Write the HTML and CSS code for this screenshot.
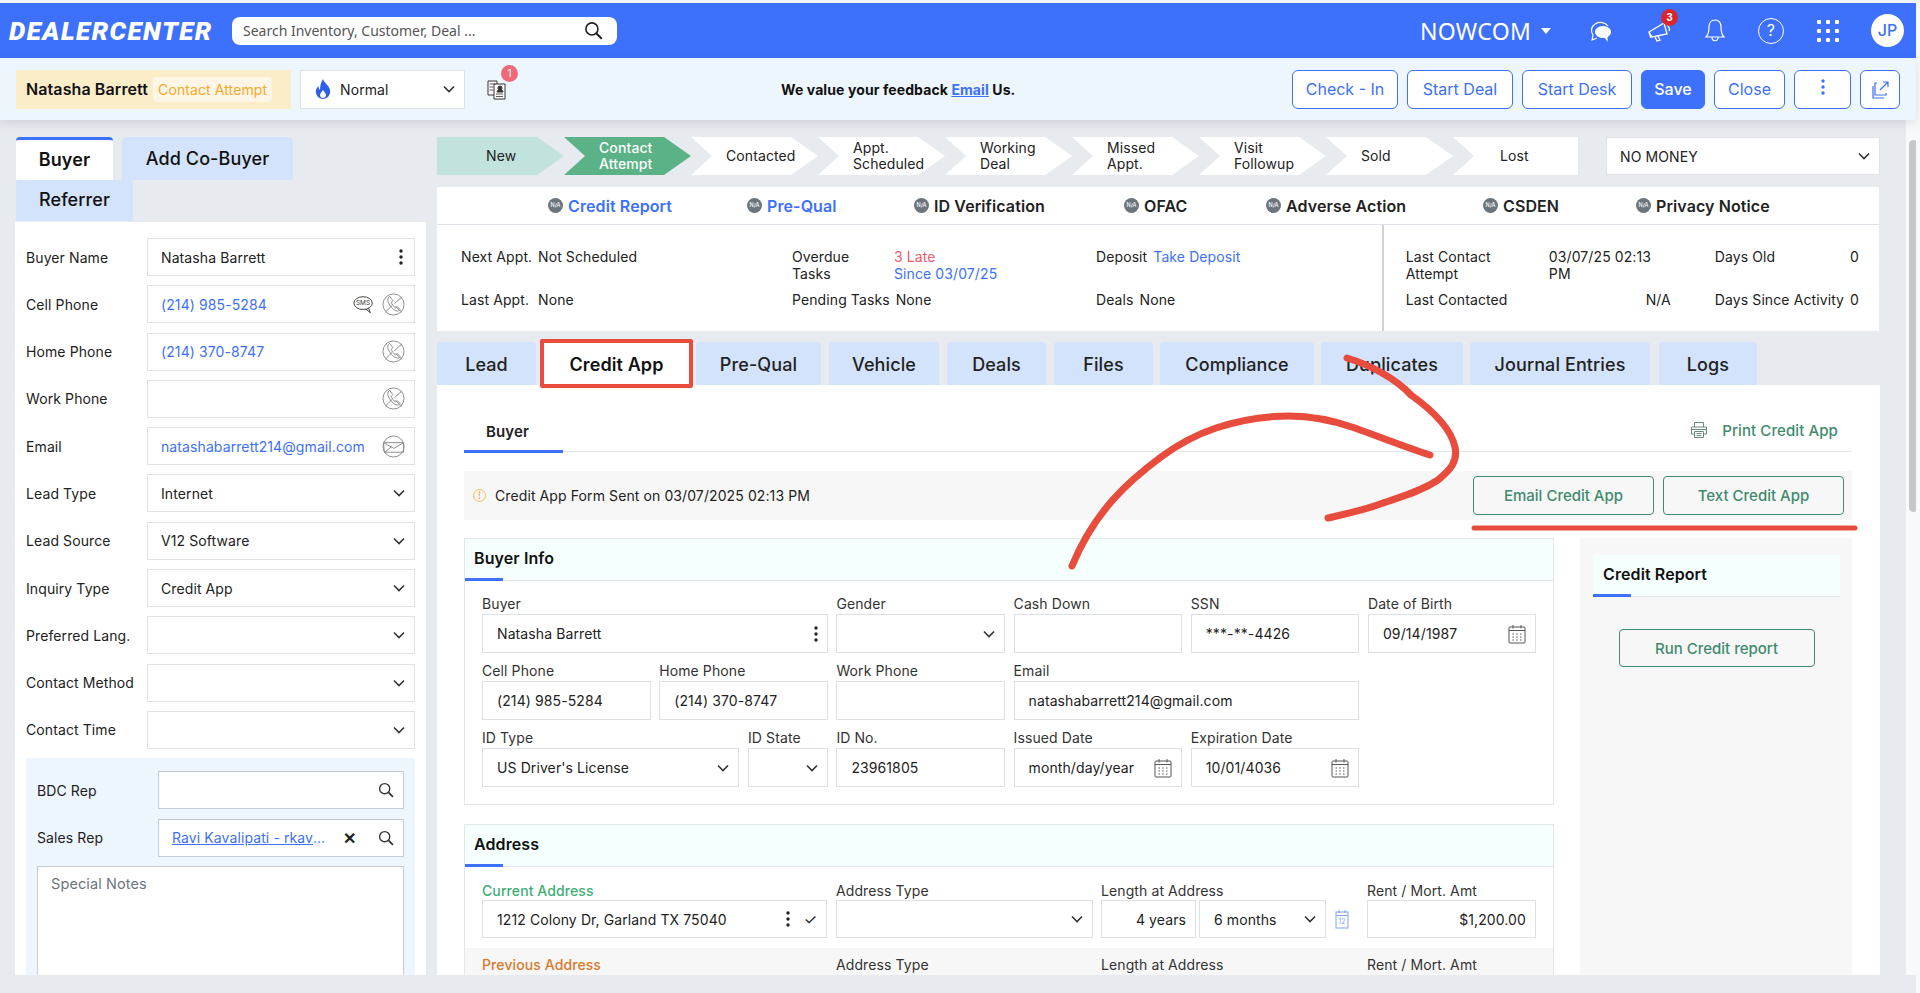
FILE: index.html
```html
<!DOCTYPE html>
<html lang="en">
<head>
    <meta charset="UTF-8">
    <title>DealerCenter - Natasha Barrett</title>
    <link rel="stylesheet" href="styles.css">
</head>
<body>

<svg class="defs" xmlns="http://www.w3.org/2000/svg">
    <symbol id="i-chev" viewBox="0 0 12 8"><path d="M1 1.500l5 5 5-5" fill="none" stroke="currentColor" stroke-width="1.600"/></symbol>
    <symbol id="i-search" viewBox="0 0 18 18"><circle cx="7.500" cy="7.500" r="5.700" fill="none" stroke="currentColor" stroke-width="1.500"/><path d="M11.800 11.800l5 5" stroke="currentColor" stroke-width="2"/></symbol>
    <symbol id="i-phone" viewBox="0 0 24 24"><g fill="none" stroke="#8a8a8a" stroke-width="1"><circle cx="12" cy="12" r="11"/><path d="M8 3.500c-2 1.500-2.500 3.500-1.500 6 1.500 4 4.500 7.500 8 9 2 .8 3.500.3 4.500-1.200l-3-3-2 1.200c-2-1.200-3.500-3.500-4.300-5.800l1.600-1.800z"/><path d="M3.500 20l7-7M13 11l8-7M14 14l6.500 6"/></g></symbol>
    <symbol id="i-mail" viewBox="0 0 24 24"><g fill="none" stroke="#8a8a8a" stroke-width="1"><circle cx="12" cy="12" r="11"/><path d="M1.500 8h21v10h-20zM1.500 8l11 6 10-6M3 18l7-6"/></g></symbol>
    <symbol id="i-cal" viewBox="0 0 18 20"><g fill="none" stroke="#555" stroke-width="1"><rect x="1" y="3" width="16" height="16" rx="1"/><path d="M1 6.500h16M5 1v3.500M13 1v3.500"/><path d="M4.500 10h1.500M8.200 10h1.500M12 10h1.500M4.500 13h1.500M8.200 13h1.500M12 13h1.500M4.500 16h1.500M8.200 16h1.500M12 16h1.500"/></g></symbol>
    <symbol id="i-dots" viewBox="0 0 4 16"><circle cx="2" cy="2" r="1.700"/><circle cx="2" cy="8" r="1.700"/><circle cx="2" cy="14" r="1.700"/></symbol>
</svg>

<div class="app">
    <header class="topbar">
        <div class="logo">DEALERCENTER</div>
        <div class="search">
            <span>Search Inventory, Customer, Deal ...</span>
            <svg class="search-icon"><use href="#i-search"/></svg>
        </div>
        <div class="company">NOWCOM <span class="caret"></span></div>
        <svg class="top-icon chat" viewBox="0 0 26 26" fill="none" stroke="#fff" stroke-width="1.200">
            <path d="M21 8a9 8 0 1 0-15 9l-1 5 5-2"/>
            <ellipse cx="16" cy="14" rx="7.500" ry="5.500" fill="#fff"/>
            <path d="M18 19l2 3v-4" fill="#fff"/>
        </svg>
        <div class="top-icon megaphone">
            <svg viewBox="0 0 26 26" fill="none" stroke="#fff" stroke-width="1.300">
                <path d="M3 14l15-9 3 11-15 3zM3 14l1.500 5 1.500 0M9 19l2 4 3-1-2-4M21 7c2 1 3 4 2 6"/>
            </svg>
            <span class="badge-red">3</span>
        </div>
        <svg class="top-icon bell" viewBox="0 0 26 26" fill="none" stroke="#fff" stroke-width="1.200">
            <path d="M13 2c-4 0-6 3-6 7 0 5-1 8-3 10h18c-2-2-3-5-3-10 0-4-2-7-6-7zM10 19c0 5 6 5 6 0"/>
        </svg>
        <div class="top-icon help">?</div>
        <div class="top-icon apps">
            <i></i><i></i><i></i><i></i><i></i><i></i><i></i><i></i><i></i>
        </div>
        <div class="avatar">JP</div>
    </header>

    <div class="toolbar">
        <div class="name-box">
            <span class="name">Natasha Barrett</span>
            <span class="status">Contact Attempt</span>
        </div>
        <div class="temp-select">
            <svg class="flame" viewBox="0 0 16 20"><path d="M8 0c1 4 6 6 7 11 1 5-3 9-7 9s-8-4-7-9c.5-2 1.500-3 2.500-4 0 2 .5 3 1.500 4C5 7 6 3 8 0zM8 11c-1 2-3 3-3 5s1.500 3 3 3 3-1 3-3-2-3-3-5z" fill="#2f5fe8"/></svg>
            <span>Normal</span>
            <svg class="chev"><use href="#i-chev"/></svg>
        </div>
        <div class="doc-icon">
            <svg viewBox="0 0 20 22" fill="#fff" stroke="#333" stroke-width="1">
                <path d="M1 3h9v14H1z"/><path d="M7 6h11v15H7z"/>
                <path d="M2.500 6h6M2.500 9h4M2.500 12h4M9 16h7M9 18.500h7" stroke-width=".8"/>
                <circle cx="13" cy="10" r="2" fill="#333"/><path d="M10 14c0-3 6-3 6 0z" fill="#333"/>
            </svg>
            <span class="doc-badge">1</span>
        </div>
        <div class="feedback">We value your feedback <a href="#">Email</a> Us.</div>
        <div class="actions">
            <button class="btn b-check">Check - In</button>
            <button class="btn b-deal">Start Deal</button>
            <button class="btn b-desk">Start Desk</button>
            <button class="btn b-save">Save</button>
            <button class="btn b-close">Close</button>
            <button class="btn b-more"><svg class="dots"><use href="#i-dots"/></svg></button>
            <button class="btn b-pop">
                <svg class="pop" viewBox="0 0 20 20" fill="none" stroke="#3d70fb" stroke-width="1.200">
                    <path d="M7 3H5v12h11v-2M3 6v12h11M10 10l8-8M13 2h5v5"/>
                </svg>
            </button>
        </div>
    </div>

    <div class="workspace">
        <aside class="left-col">
            <div class="left-tabs">
                <div class="ltab ltab-on">Buyer</div>
                <div class="ltab ltab-co">Add Co-Buyer</div>
                <div class="ltab ltab-ref">Referrer</div>
            </div>
            <div class="left-panel">
                <div class="lrow"><label>Buyer Name</label><div class="linput">Natasha Barrett<svg class="dots end"><use href="#i-dots"/></svg></div></div>
                <div class="lrow"><label>Cell Phone</label><div class="linput link">(214) 985-5284
                    <svg class="sms end" viewBox="0 0 24 20" fill="none" stroke="#333"><ellipse cx="11" cy="8.500" rx="10" ry="7"/><path d="M14 15l5 4-2-5"/><text x="11" y="11" font-size="7" text-anchor="middle" fill="#333" stroke="none">SMS</text></svg>
                    <svg class="round"><use href="#i-phone"/></svg></div></div>
                <div class="lrow"><label>Home Phone</label><div class="linput link">(214) 370-8747<svg class="round end"><use href="#i-phone"/></svg></div></div>
                <div class="lrow"><label>Work Phone</label><div class="linput"><svg class="round end"><use href="#i-phone"/></svg></div></div>
                <div class="lrow"><label>Email</label><div class="linput link">natashabarrett214@gmail.com<svg class="round end"><use href="#i-mail"/></svg></div></div>
                <div class="lrow"><label>Lead Type</label><div class="linput">Internet<svg class="chev end"><use href="#i-chev"/></svg></div></div>
                <div class="lrow"><label>Lead Source</label><div class="linput">V12 Software<svg class="chev end"><use href="#i-chev"/></svg></div></div>
                <div class="lrow"><label>Inquiry Type</label><div class="linput">Credit App<svg class="chev end"><use href="#i-chev"/></svg></div></div>
                <div class="lrow"><label>Preferred Lang.</label><div class="linput"><svg class="chev end"><use href="#i-chev"/></svg></div></div>
                <div class="lrow"><label>Contact Method</label><div class="linput"><svg class="chev end"><use href="#i-chev"/></svg></div></div>
                <div class="lrow"><label>Contact Time</label><div class="linput"><svg class="chev end"><use href="#i-chev"/></svg></div></div>
                <div class="rep-box">
                    <div class="lrow"><label>BDC Rep</label><div class="linput rep"><svg class="mag end"><use href="#i-search"/></svg></div></div>
                    <div class="lrow"><label>Sales Rep</label><div class="linput rep"><a class="rep-link" href="#">Ravi Kavalipati - rkava...</a><span class="rep-x">&#10005;</span><svg class="mag end"><use href="#i-search"/></svg></div></div>
                    <div class="notes">Special Notes</div>
                </div>
            </div>
        </aside>

        <main class="main-col">
            <div class="stage-row">
                <div class="steps">
                    <div class="step step-first">New</div>
                    <div class="step step-active">Contact<br>Attempt</div>
                    <div class="step">Contacted</div>
                    <div class="step">Appt.<br>Scheduled</div>
                    <div class="step">Working<br>Deal</div>
                    <div class="step">Missed<br>Appt.</div>
                    <div class="step">Visit<br>Followup</div>
                    <div class="step">Sold</div>
                    <div class="step step-last">Lost</div>
                </div>
                <div class="money-select">NO MONEY<svg class="chev end"><use href="#i-chev"/></svg></div>
            </div>

            <section class="info-card">
                <div class="checks">
                    <span class="check c1"><i class="na">N/A</i><a href="#">Credit Report</a></span>
                    <span class="check c2"><i class="na">N/A</i><a href="#">Pre-Qual</a></span>
                    <span class="check c3"><i class="na">N/A</i>ID Verification</span>
                    <span class="check c4"><i class="na">N/A</i>OFAC</span>
                    <span class="check c5"><i class="na">N/A</i>Adverse Action</span>
                    <span class="check c6"><i class="na">N/A</i>CSDEN</span>
                    <span class="check c7"><i class="na">N/A</i>Privacy Notice</span>
                </div>
                <div class="info-body">
                    <div class="info-left">
                        <div class="pair"><span>Next Appt.</span><span>Not Scheduled</span></div>
                        <div class="pair"><span class="k-overdue">Overdue Tasks</span><span><b class="late">3 Late</b><br><a href="#">Since 03/07/25</a></span></div>
                        <div class="pair"><span>Deposit</span><a href="#">Take Deposit</a></div>
                        <div class="pair"><span>Last Appt.</span><span>None</span></div>
                        <div class="pair"><span>Pending Tasks</span><span>None</span></div>
                        <div class="pair"><span>Deals</span><span>None</span></div>
                    </div>
                    <div class="info-right">
                        <div class="pair"><span class="k-contact">Last Contact Attempt</span><span class="v-contact">03/07/25 02:13 PM</span></div>
                        <div class="pair pair-split"><span>Days Old</span><span>0</span></div>
                        <div class="pair"><span class="k-contact">Last Contacted</span><span class="v-contact v-na">N/A</span></div>
                        <div class="pair pair-split"><span>Days Since Activity</span><span>0</span></div>
                    </div>
                </div>
            </section>

            <nav class="tabs">
                <div class="tab t-lead">Lead</div>
                <div class="tab t-credit">Credit App</div>
                <div class="tab t-prequal">Pre-Qual</div>
                <div class="tab t-vehicle">Vehicle</div>
                <div class="tab t-deals">Deals</div>
                <div class="tab t-files">Files</div>
                <div class="tab t-comp">Compliance</div>
                <div class="tab t-dup">Duplicates</div>
                <div class="tab t-journal">Journal Entries</div>
                <div class="tab t-logs">Logs</div>
            </nav>

            <section class="content">
                <div class="sub-head">
                    <div class="sub-tab">Buyer</div>
                    <div class="print">
                        <svg viewBox="0 0 18 18" fill="none" stroke="#6b8a7d" stroke-width="1"><path d="M4.500 6V1.500h9V6M4.500 13H1.500V6h15v7h-3M4.500 10.500h9v6h-9zM6.500 12.500h5M6.500 14.500h5M1.500 8.500h15"/></svg>
                        <span>Print Credit App</span>
                    </div>
                </div>
                <div class="alert">
                    <span class="alert-icon">!</span>
                    <span class="alert-text">Credit App Form Sent on 03/07/2025 02:13 PM</span>
                    <button class="btn-green b-email">Email Credit App</button>
                    <button class="btn-green b-text">Text Credit App</button>
                </div>

                <div class="columns">
                    <div class="forms">
                        <div class="card">
                            <h3 class="card-title">Buyer Info</h3>
                            <div class="grid">
                                <div class="field span2"><label>Buyer</label><div class="inp">Natasha Barrett<svg class="dots end"><use href="#i-dots"/></svg></div></div>
                                <div class="field"><label>Gender</label><div class="inp"><svg class="chev end"><use href="#i-chev"/></svg></div></div>
                                <div class="field"><label>Cash Down</label><div class="inp"></div></div>
                                <div class="field"><label>SSN</label><div class="inp">***-**-4426</div></div>
                                <div class="field"><label>Date of Birth</label><div class="inp">09/14/1987<svg class="cal end"><use href="#i-cal"/></svg></div></div>

                                <div class="field"><label>Cell Phone</label><div class="inp">(214) 985-5284</div></div>
                                <div class="field"><label>Home Phone</label><div class="inp">(214) 370-8747</div></div>
                                <div class="field"><label>Work Phone</label><div class="inp"></div></div>
                                <div class="field span2"><label>Email</label><div class="inp">natashabarrett214@gmail.com</div></div>
                                <div class="field empty"></div>

                                <div class="span2 id-pair">
                                    <div class="field id-type"><label>ID Type</label><div class="inp">US Driver's License<svg class="chev end"><use href="#i-chev"/></svg></div></div>
                                    <div class="field id-state"><label>ID State</label><div class="inp"><svg class="chev end"><use href="#i-chev"/></svg></div></div>
                                </div>
                                <div class="field"><label>ID No.</label><div class="inp">23961805</div></div>
                                <div class="field"><label>Issued Date</label><div class="inp">month/day/year<svg class="cal end"><use href="#i-cal"/></svg></div></div>
                                <div class="field"><label>Expiration Date</label><div class="inp">10/01/4036<svg class="cal end"><use href="#i-cal"/></svg></div></div>
                            </div>
                        </div>

                        <div class="card card-address">
                            <h3 class="card-title">Address</h3>
                            <div class="addr-row">
                                <div class="field a-street"><label class="cur">Current Address</label><div class="inp">1212 Colony Dr, Garland TX 75040<svg class="dots end"><use href="#i-dots"/></svg><span class="tick">&#10003;</span></div></div>
                                <div class="field a-type"><label>Address Type</label><div class="inp"><svg class="chev end"><use href="#i-chev"/></svg></div></div>
                                <div class="field a-len"><label>Length at Address</label>
                                    <div class="len-pair">
                                        <div class="inp inp-years">4 years</div>
                                        <div class="inp inp-months">6 months<svg class="chev end"><use href="#i-chev"/></svg></div>
                                        <svg class="cal-blue" viewBox="0 0 14 20" fill="none" stroke="#7fa3f5"><rect x="1" y="3" width="12" height="16"/><path d="M1 6.500h12M4 1v3M10 1v3"/><text x="7" y="15" font-size="7" text-anchor="middle" fill="#7fa3f5" stroke="none">12</text></svg>
                                    </div>
                                </div>
                                <div class="field a-rent"><label>Rent / Mort. Amt</label><div class="inp inp-right">$1,200.00</div></div>
                            </div>
                            <div class="addr-row addr-prev">
                                <div class="field a-street"><label class="prev">Previous Address</label></div>
                                <div class="field a-type"><label>Address Type</label></div>
                                <div class="field a-len"><label>Length at Address</label></div>
                                <div class="field a-rent"><label>Rent / Mort. Amt</label></div>
                            </div>
                        </div>
                    </div>

                    <aside class="credit-side">
                        <h3 class="card-title">Credit Report</h3>
                        <button class="btn-green b-run">Run Credit report</button>
                    </aside>
                </div>
            </section>
        </main>

        <div class="scroll-track"><div class="scroll-thumb"></div></div>
    </div>
</div>

<!-- red marker drawn over the screenshot -->
<svg class="markup" xmlns="http://www.w3.org/2000/svg" viewBox="0 0 1920 993">
    <g fill="none" stroke="#e84c3d" stroke-width="7" stroke-linecap="round">
        <path d="M1072 566C1095 510 1130 480 1161 457C1180 443 1195 435 1216 428C1240 420 1265 416 1289 416C1315 416 1335 421 1355 428C1385 439 1408 448 1430 455"/>
        <path d="M1347 358C1370 365 1395 378 1411 395C1425 405 1450 425 1455 447C1458 462 1450 470 1438 480C1420 492 1400 497 1383 503C1365 510 1345 514 1328 518"/>
        <path d="M1474 528L1855 528" stroke-width="5"/>
    </g>
</svg>

</body>
</html>
```

FILE: styles.css
```css
* {
    box-sizing: border-box;
}
html, body {
    margin: 0;
    height: 100%;
    overflow: hidden;
}
body {
    background: #f8f9fa;
    color: #222;
    font-family: Inter, "Noto Sans", sans-serif;
    font-size: 14px;
    letter-spacing: .1px;
}
a {
    color: #3d70fb;
    text-decoration: none;
}
button {
    font-family: inherit;
    cursor: pointer;
}
h3 {
    margin: 0;
}
.defs {
    position: absolute;
    width: 0;
    height: 0;
}
.app {
    width: 1916px;
    height: 993px;
    display: flex;
    flex-direction: column;
}

/* top bar */
.topbar {
    flex: none;
    height: 58px;
    border-top: 3px solid #f2f3f5;
    background: #3d70fb;
    display: flex;
    align-items: center;
    color: #fff;
    padding-left: 9px;
}
.logo {
    width: 223px;
    font-family: Roboto, sans-serif;
    font-weight: 900;
    font-style: italic;
    font-size: 26px;
    letter-spacing: 1.45px;
    white-space: nowrap;
}
.search {
    width: 385px;
    height: 28px;
    background: #fff;
    border-radius: 8px;
    color: #555;
    font-family: "Noto Sans", sans-serif;
    font-size: 14px;
    letter-spacing: 0;
    display: flex;
    align-items: center;
    justify-content: space-between;
    padding: 0 14px 0 11px;
}
.search-icon {
    width: 19px;
    height: 19px;
    color: #222;
}
.company {
    margin-left: auto;
    font-size: 23px;
    letter-spacing: .3px;
    width: 167px;
    white-space: nowrap;
    font-family: "Noto Sans", sans-serif;
}
.caret {
    display: inline-block;
    border: 5px solid transparent;
    border-top: 6px solid #fff;
    border-bottom: 0;
    margin-left: 4px;
    vertical-align: 6px;
}
.top-icon {
    width: 26px;
    height: 26px;
    margin-right: 31px;
    position: relative;
    flex: none;
}
.megaphone svg {
    width: 26px;
    height: 26px;
}
.badge-red {
    position: absolute;
    top: -9px;
    right: -6px;
    width: 17px;
    height: 17px;
    border-radius: 50%;
    background: #d9262c;
    font-size: 10px;
    font-weight: 700;
    line-height: 17px;
    text-align: center;
}
.chat {
    margin-right: 33px;
}
.megaphone {
    margin-right: 30px;
}
.bell {
    margin-right: 30px;
}
.help {
    border: 1.4px solid #fff;
    border-radius: 50%;
    text-align: center;
    line-height: 23px;
    font-size: 16px;
    margin-right: 33px;
}
.apps {
    display: grid;
    grid-template-columns: repeat(3, 4px);
    gap: 5px;
    width: 22px;
    height: 22px;
    margin-right: 32px;
}
.apps i {
    background: #fff;
    border-radius: 1px;
}
.avatar {
    width: 33px;
    height: 33px;
    border-radius: 50%;
    background: #fff;
    color: #3d70fb;
    text-align: center;
    line-height: 33px;
    font-size: 16px;
    font-weight: 500;
    margin-right: 12px;
}

/* toolbar */
.toolbar {
    flex: none;
    height: 62px;
    background: #edf5fd;
    box-shadow: 0 3px 10px rgba(60, 70, 90, .14);
    display: flex;
    align-items: center;
    padding-left: 16px;
    position: relative;
    z-index: 1;
}
.name-box {
    width: 275px;
    height: 39px;
    background: #fcedc9;
    display: flex;
    align-items: center;
    padding-left: 10px;
    gap: 5px;
}
.name {
    font-weight: 600;
    font-size: 16px;
    color: #111;
    white-space: nowrap;
}
.status {
    background: #fdf6e6;
    color: #f5a92a;
    font-size: 14px;
    padding: 4px 5px;
    border-radius: 4px;
    white-space: nowrap;
}
.temp-select {
    width: 165px;
    height: 39px;
    margin-left: 9px;
    background: #fff;
    border: 1px solid #dfe3e8;
    display: flex;
    align-items: center;
    padding-left: 14px;
    position: relative;
}
.flame {
    width: 16px;
    height: 20px;
    margin-right: 9px;
}
.chev {
    width: 12px;
    height: 8px;
    color: #333;
}
.end {
    margin-left: auto;
    flex: none;
}
.temp-select .chev {
    margin-left: auto;
    margin-right: 9px;
}
.doc-icon {
    width: 20px;
    height: 22px;
    margin-left: 22px;
    position: relative;
}
.doc-badge {
    position: absolute;
    top: -13px;
    left: 14px;
    width: 17px;
    height: 17px;
    border-radius: 50%;
    background: #ee6a78;
    color: #fff;
    font-size: 10px;
    text-align: center;
    line-height: 17px;
}
.feedback {
    margin-left: 274px;
    width: 240px;
    font-weight: 700;
    font-size: 14px;
    color: #111;
    white-space: nowrap;
}
.feedback a {
    text-decoration: underline;
}
.actions {
    margin-left: auto;
    display: flex;
    gap: 9px;
    margin-right: 16px;
}
.btn {
    height: 39px;
    border: 1px solid #3d70fb;
    border-radius: 6px;
    background: #fff;
    color: #3d70fb;
    font-size: 16px;
    padding: 0;
}
.b-check { width: 106px; }
.b-deal { width: 106px; }
.b-desk { width: 110px; }
.b-save { width: 64px; background: #3d70fb; color: #fff; font-weight: 500; }
.b-close { width: 71px; }
.b-more { width: 57px; }
.b-pop { width: 40px; }
.dots {
    width: 4px;
    height: 16px;
    fill: #222;
}
.b-more .dots {
    fill: #3d70fb;
}
.pop {
    width: 20px;
    height: 20px;
    vertical-align: middle;
}

/* page body */
.workspace {
    flex: 1;
    min-height: 0;
    display: flex;
    background: #e7eaef;
    padding: 17px 0 18px 15px;
    overflow: hidden;
}
.left-col {
    flex: none;
    width: 411px;
    margin-right: 11px;
    display: flex;
    flex-direction: column;
    min-height: 0;
}
.left-tabs {
    flex: none;
    height: 85px;
    display: flex;
    flex-wrap: wrap;
    align-content: flex-start;
    padding: 0 30px 0 1px;
    column-gap: 9px;
}
.ltab {
    height: 43px;
    background: #d3e3fb;
    border-radius: 4px 4px 0 0;
    font-size: 18px;
    font-weight: 500;
    text-align: center;
    line-height: 44px;
    color: #111;
}
.ltab-on {
    width: 97px;
    background: #fff;
    border-top: 3px solid #3d70fb;
    line-height: 40px;
    font-weight: 600;
}
.ltab-co {
    width: 171px;
}
.ltab-ref {
    width: 117px;
    height: 41px;
    line-height: 40px;
}
.left-panel {
    flex: 1;
    min-height: 0;
    overflow: hidden;
    background: #fff;
    padding: 16px 11px 0;
}
.lrow {
    display: flex;
    align-items: center;
    height: 38px;
    margin-bottom: 9.3px;
}
.lrow label {
    width: 121px;
    flex: none;
    white-space: nowrap;
}
.linput {
    flex: 1;
    min-width: 0;
    height: 38px;
    border: 1px solid #e0e2e6;
    background: #fff;
    display: flex;
    align-items: center;
    padding: 0 9px 0 13px;
    white-space: nowrap;
}
.link {
    color: #3d70fb;
}
.round {
    width: 23px;
    height: 23px;
    flex: none;
    margin-left: 7px;
}
.round.end {
    margin-left: auto;
}
.sms {
    width: 22px;
    height: 19px;
}
.linput .dots.end {
    margin-right: 2px;
}
.rep-box {
    background: #edf5fd;
    padding: 13px 11px 0;
    height: 300px;
}
.rep-box .rep {
    border-color: #c6ccd5;
}
.mag {
    width: 16px;
    height: 16px;
    color: #333;
}
.rep-link {
    text-decoration: underline;
    width: 156px;
    overflow: hidden;
    text-overflow: ellipsis;
}
.rep-x {
    margin-left: 15px;
    font-size: 16px;
    font-weight: 700;
}
.notes {
    height: 200px;
    background: #fff;
    border: 1px solid #c6ccd5;
    padding: 8px 13px;
    color: #6c757d;
    font-size: 14.500px;
}

/* main column */
.main-col {
    flex: none;
    width: 1443px;
    display: flex;
    flex-direction: column;
    min-height: 0;
}
.stage-row {
    flex: none;
    display: flex;
    justify-content: space-between;
    height: 38px;
}
.steps {
    display: flex;
}
.step {
    width: 127px;
    height: 38px;
    background: #fff;
    clip-path: polygon(0 0, calc(100% - 27px) 0, 100% 50%, calc(100% - 27px) 100%, 0 100%, 21px 50%);
    display: flex;
    align-items: center;
    padding-left: 35px;
    line-height: 16px;
}
.step-first {
    background: #c1e2dd;
    clip-path: polygon(0 0, calc(100% - 27px) 0, 100% 50%, calc(100% - 27px) 100%, 0 100%);
    padding-left: 49px;
}
.step-active {
    background: #5ab286;
    color: #fff;
    font-weight: 500;
}
.step-last {
    width: 125px;
    clip-path: polygon(0 0, 100% 0, 100% 100%, 0 100%, 21px 50%);
    padding-left: 47px;
}
.money-select {
    width: 274px;
    height: 38px;
    background: #fff;
    border: 1px solid #e0e2e6;
    display: flex;
    align-items: center;
    padding: 0 9px 0 13px;
}
.info-card {
    flex: none;
    margin-top: 12px;
    height: 144px;
    width: 1442px;
    background: #fff;
}
.checks {
    height: 38px;
    border-bottom: 1.5px solid #dfe2e8;
    display: flex;
    align-items: center;
    padding-left: 111px;
    font-weight: 600;
    font-size: 16px;
    color: #222;
}
.check {
    display: inline-flex;
    align-items: center;
    white-space: nowrap;
}
.check a {
    font-weight: 600;
}
.c1 { width: 199px; }
.c2 { width: 167px; }
.c3 { width: 210px; }
.c4 { width: 142px; }
.c5 { width: 217px; }
.c6 { width: 153px; }
.na {
    width: 15px;
    height: 15px;
    border-radius: 50%;
    background: #6c757d;
    color: #fff;
    font-style: normal;
    font-size: 5.500px;
    font-weight: 500;
    line-height: 15px;
    text-align: center;
    letter-spacing: 0;
    margin-right: 5px;
    flex: none;
}
.info-body {
    display: flex;
    height: 106px;
}
.info-left {
    width: 953px;
    padding: 23px 0 0 24px;
    display: grid;
    grid-template-columns: 331px 304px 1fr;
    grid-template-rows: 43px 43px;
    line-height: 17px;
    white-space: nowrap;
}
.info-right {
    flex: 1;
    border-left: 2px solid #cfd3d9;
    padding: 23px 20px 0 22px;
    display: grid;
    grid-template-columns: 309px 1fr;
    grid-template-rows: 43px 43px;
    line-height: 17px;
}
.pair {
    display: flex;
    gap: 6px;
}
.info-left .pair:nth-child(1) span:first-child,
.info-left .pair:nth-child(4) span:first-child {
    width: 71px;
}
.k-overdue {
    width: 96px;
    padding-right: 20px;
    white-space: normal;
}
.late {
    color: #ee5a6c;
    font-weight: 400;
}
.k-contact {
    width: 137px;
    padding-right: 28px;
    flex: none;
}
.v-contact {
    width: 115px;
}
.v-na {
    text-align: right;
    width: 122px;
}
.pair-split {
    justify-content: space-between;
    white-space: nowrap;
}

/* tabs */
.tabs {
    flex: none;
    display: flex;
    margin-top: 11px;
    height: 43px;
}
.tab {
    height: 43px;
    margin-right: 8px;
    background: #d3e3fb;
    border-radius: 4px 4px 0 0;
    font-size: 18px;
    font-weight: 500;
    text-align: center;
    line-height: 45px;
    white-space: nowrap;
}
.t-lead { width: 99px; }
.t-credit {
    width: 153px;
    margin: -3px 3px -3px -4px;
    height: 49px;
    background: #fff;
    border: 4px solid #e84c3d;
    border-radius: 2px;
    font-weight: 600;
    color: #111;
    line-height: 43px;
    position: relative;
}
.t-prequal { width: 125px; }
.t-vehicle { width: 110px; }
.t-deals { width: 99px; }
.t-files { width: 99px; margin-right: 7px; }
.t-comp { width: 154px; margin-right: 7px; }
.t-dup { width: 142px; margin-right: 7px; }
.t-journal { width: 180px; margin-right: 9px; }
.t-logs { width: 98px; }

/* credit app form */
.content {
    flex: 1;
    min-height: 0;
    overflow: hidden;
    background: #fff;
    padding: 0 28px 0 27px;
}
.sub-head {
    height: 67px;
    display: flex;
    justify-content: space-between;
    align-items: flex-end;
    border-bottom: 1.5px solid #e3e6ea;
}
.sub-tab {
    width: 99px;
    height: 38px;
    border-bottom: 3px solid #3d70fb;
    margin-bottom: -1.500px;
    padding: 7px 0 0 22px;
    font-weight: 600;
    font-size: 15px;
    line-height: 20px;
}
.print {
    display: flex;
    align-items: center;
    gap: 14px;
    color: #3f8a6d;
    font-weight: 500;
    font-size: 15px;
    height: 38px;
    padding: 0 14px 4px 0;
}
.print svg {
    width: 18px;
    height: 18px;
}
.alert {
    margin-top: 19px;
    height: 49px;
    background: #f7f7f7;
    display: flex;
    align-items: center;
    padding: 0 8px 0 9px;
}
.alert-icon {
    width: 13px;
    height: 13px;
    border: 1px solid #f3c15b;
    border-radius: 50%;
    color: #f0a92c;
    font-size: 10px;
    line-height: 11px;
    text-align: center;
    margin-right: 9px;
}
.alert-text {
    flex: 1;
}
.btn-green {
    height: 39px;
    background: transparent;
    border: 1px solid #3f8a6d;
    border-radius: 4px;
    color: #3f8a6d;
    font-size: 15px;
    font-weight: 500;
    padding: 0;
}
.b-email {
    width: 181px;
    margin-right: 9px;
}
.b-text {
    width: 181px;
}
.columns {
    display: flex;
    margin-top: 18px;
    gap: 26px;
}
.forms {
    flex: none;
    width: 1090px;
}
.card {
    border: 1px solid #e3e6ea;
    padding-bottom: 17px;
}
.card-title {
    height: 42px;
    background: #f4fffe;
    border-bottom: 1px solid #e3e6ea;
    font-size: 16px;
    font-weight: 600;
    line-height: 38px;
    padding-left: 9px;
    position: relative;
    color: #111;
}
.card-title::after {
    content: "";
    position: absolute;
    left: 0;
    bottom: -1px;
    width: 38px;
    height: 3px;
    background: #3d70fb;
}
.grid {
    display: grid;
    grid-template-columns: repeat(6, 168.500px);
    column-gap: 8.700px;
    row-gap: 9px;
    padding: 14px 17px 0;
}
.span2 {
    grid-column: span 2;
}
.field label {
    display: block;
    height: 17px;
    line-height: 17px;
    margin-bottom: 2px;
    white-space: nowrap;
    color: #333;
}
.inp {
    height: 39px;
    border: 1px solid #dcdfe4;
    display: flex;
    align-items: center;
    padding: 0 9px 0 14px;
    white-space: nowrap;
    background: #fff;
}
.cal {
    width: 18px;
    height: 20px;
}
.id-pair {
    display: flex;
    gap: 9px;
}
.id-type {
    width: 257px;
}
.id-state {
    flex: 1;
    min-width: 0;
}
.card-address {
    margin-top: 19px;
    padding-bottom: 0;
}
.addr-row {
    display: flex;
    padding: 15px 17px 10px;
}
.addr-row label {
    margin-bottom: 1px;
}
.addr-row .inp {
    height: 38px;
}
.addr-row label.cur {
    color: #3fae75;
    font-weight: 500;
}
.addr-row label.prev {
    color: #d9792b;
    font-weight: 500;
}
.addr-prev {
    background: #f7f7f7;
    padding-top: 8px;
    height: 60px;
}
.a-street {
    width: 345px;
    margin-right: 9px;
}
.a-type {
    width: 257px;
    margin-right: 8px;
}
.a-len {
    width: 266px;
}
.a-rent {
    width: 169px;
}
.len-pair {
    display: flex;
    align-items: center;
    gap: 3px;
}
.inp-years {
    width: 95px;
    justify-content: flex-end;
}
.inp-months {
    width: 127px;
}
.cal-blue {
    width: 14px;
    height: 20px;
    margin-left: 6px;
}
.inp-right {
    justify-content: flex-end;
}
.tick {
    margin-left: 14px;
    font-size: 15px;
}
.credit-side {
    flex: none;
    width: 272px;
    height: 500px;
    background: #f7f7f7;
    padding: 17px 12px 0 13px;
    text-align: center;
}
.credit-side .card-title {
    text-align: left;
    padding-left: 10px;
}
.b-run {
    width: 196px;
    height: 38px;
    margin-top: 32px;
}

/* scrollbar */
.scroll-track {
    flex: none;
    width: 15px;
    margin-left: 26px;
    margin-top: -17px;
    background: #f8f9fa;
    padding: 20px 0 0 3px;
}
.scroll-thumb {
    width: 9px;
    height: 372px;
    background: #c4c7cb;
    border-radius: 5px;
}

/* annotation over the page */
.markup {
    position: absolute;
    top: 0;
    left: 0;
    width: 1920px;
    height: 993px;
    pointer-events: none;
    z-index: 5;
}
```
